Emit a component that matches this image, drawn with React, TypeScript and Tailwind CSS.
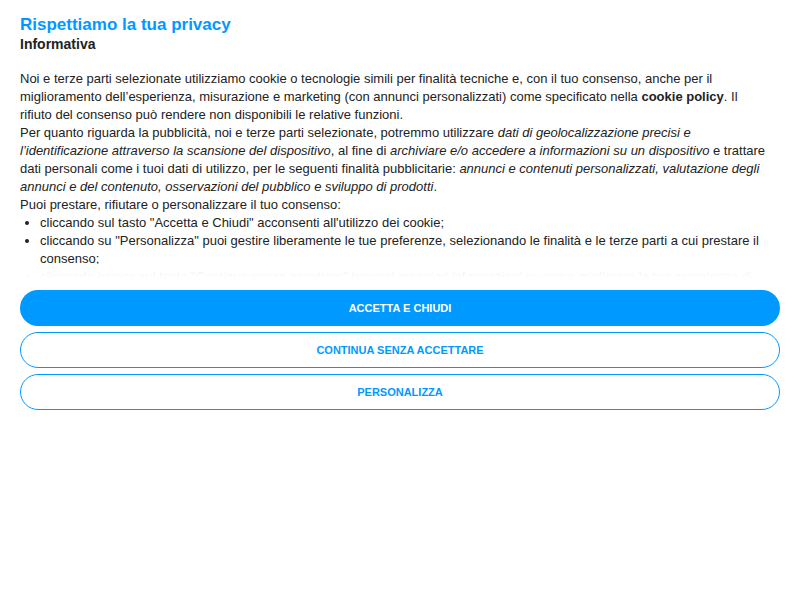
import React from "react";

const bullets: React.ReactNode[] = [
  <>cliccando sul tasto "Accetta e Chiudi" acconsenti all'utilizzo dei cookie;</>,
  <>
    cliccando su "Personalizza" puoi gestire liberamente le tue preferenze, selezionando le finalità e le terze parti a
    cui prestare il consenso;
  </>,
  <>
    cliccando invece sul tasto "Continua senza accettare" troverai maggiori informazioni su come migliorare la tua
    esperienza di navigazione e continuerai la navigazione senza cookie di profilazione.
  </>,
];

const ConsentText = (): JSX.Element => (
  <div className="relative h-[278px] overflow-hidden pt-[15px]">
    <h1 className="text-[17px] font-bold leading-[20px] text-[#0099ff]">Rispettiamo la tua privacy</h1>
    <h2 className="text-[14px] font-bold leading-[18px] text-[#222]">Informativa</h2>
    <div className="mt-[17px] pr-[10px] text-[13px] leading-[18px] text-[#222]">
      <p>
        Noi e terze parti selezionate utilizziamo cookie o tecnologie simili per finalità tecniche e, con il tuo
        consenso, anche per il miglioramento dell’esperienza, misurazione e marketing (con annunci personalizzati) come
        specificato nella <b>cookie policy</b>. Il rifiuto del consenso può rendere non disponibili le relative funzioni.
      </p>
      <p>
        Per quanto riguarda la pubblicità, noi e terze parti selezionate, potremmo utilizzare{" "}
        <i>dati di geolocalizzazione precisi e l’identificazione attraverso la scansione del dispositivo</i>, al fine di{" "}
        <i>archiviare e/o accedere a informazioni su un dispositivo</i> e trattare dati personali come i tuoi dati di
        utilizzo, per le seguenti finalità pubblicitarie:{" "}
        <i>
          annunci e contenuti personalizzati, valutazione degli annunci e del contenuto, osservazioni del pubblico e
          sviluppo di prodotti
        </i>
        .
      </p>
      <p>Puoi prestare, rifiutare o personalizzare il tuo consenso:</p>
      <ul className="list-disc pl-[20px]">
        {bullets.map((b, i) => (
          <li key={i}>{b}</li>
        ))}
      </ul>
    </div>
    <div className="pointer-events-none absolute bottom-0 left-0 h-[14px] w-full bg-gradient-to-b from-white/85 to-white" />
  </div>
);

export default function App(): JSX.Element {
  return (
    <div className="min-h-[600px] bg-white px-5 font-['Liberation_Sans',Arial,sans-serif]">
      <ConsentText />
      <div className="mt-3 flex flex-col gap-[6px]">
        <button className="h-9 w-full rounded-full bg-[#0099ff] text-[11px] font-bold uppercase text-white">
          Accetta e chiudi
        </button>
        <button className="h-9 w-full rounded-full border border-[#0099ff] bg-white text-[11px] font-bold uppercase text-[#0099ff]">
          Continua senza accettare
        </button>
        <button className="h-9 w-full rounded-full border border-[#0099ff] bg-white text-[11px] font-bold uppercase text-[#0099ff]">
          Personalizza
        </button>
      </div>
    </div>
  );
}
